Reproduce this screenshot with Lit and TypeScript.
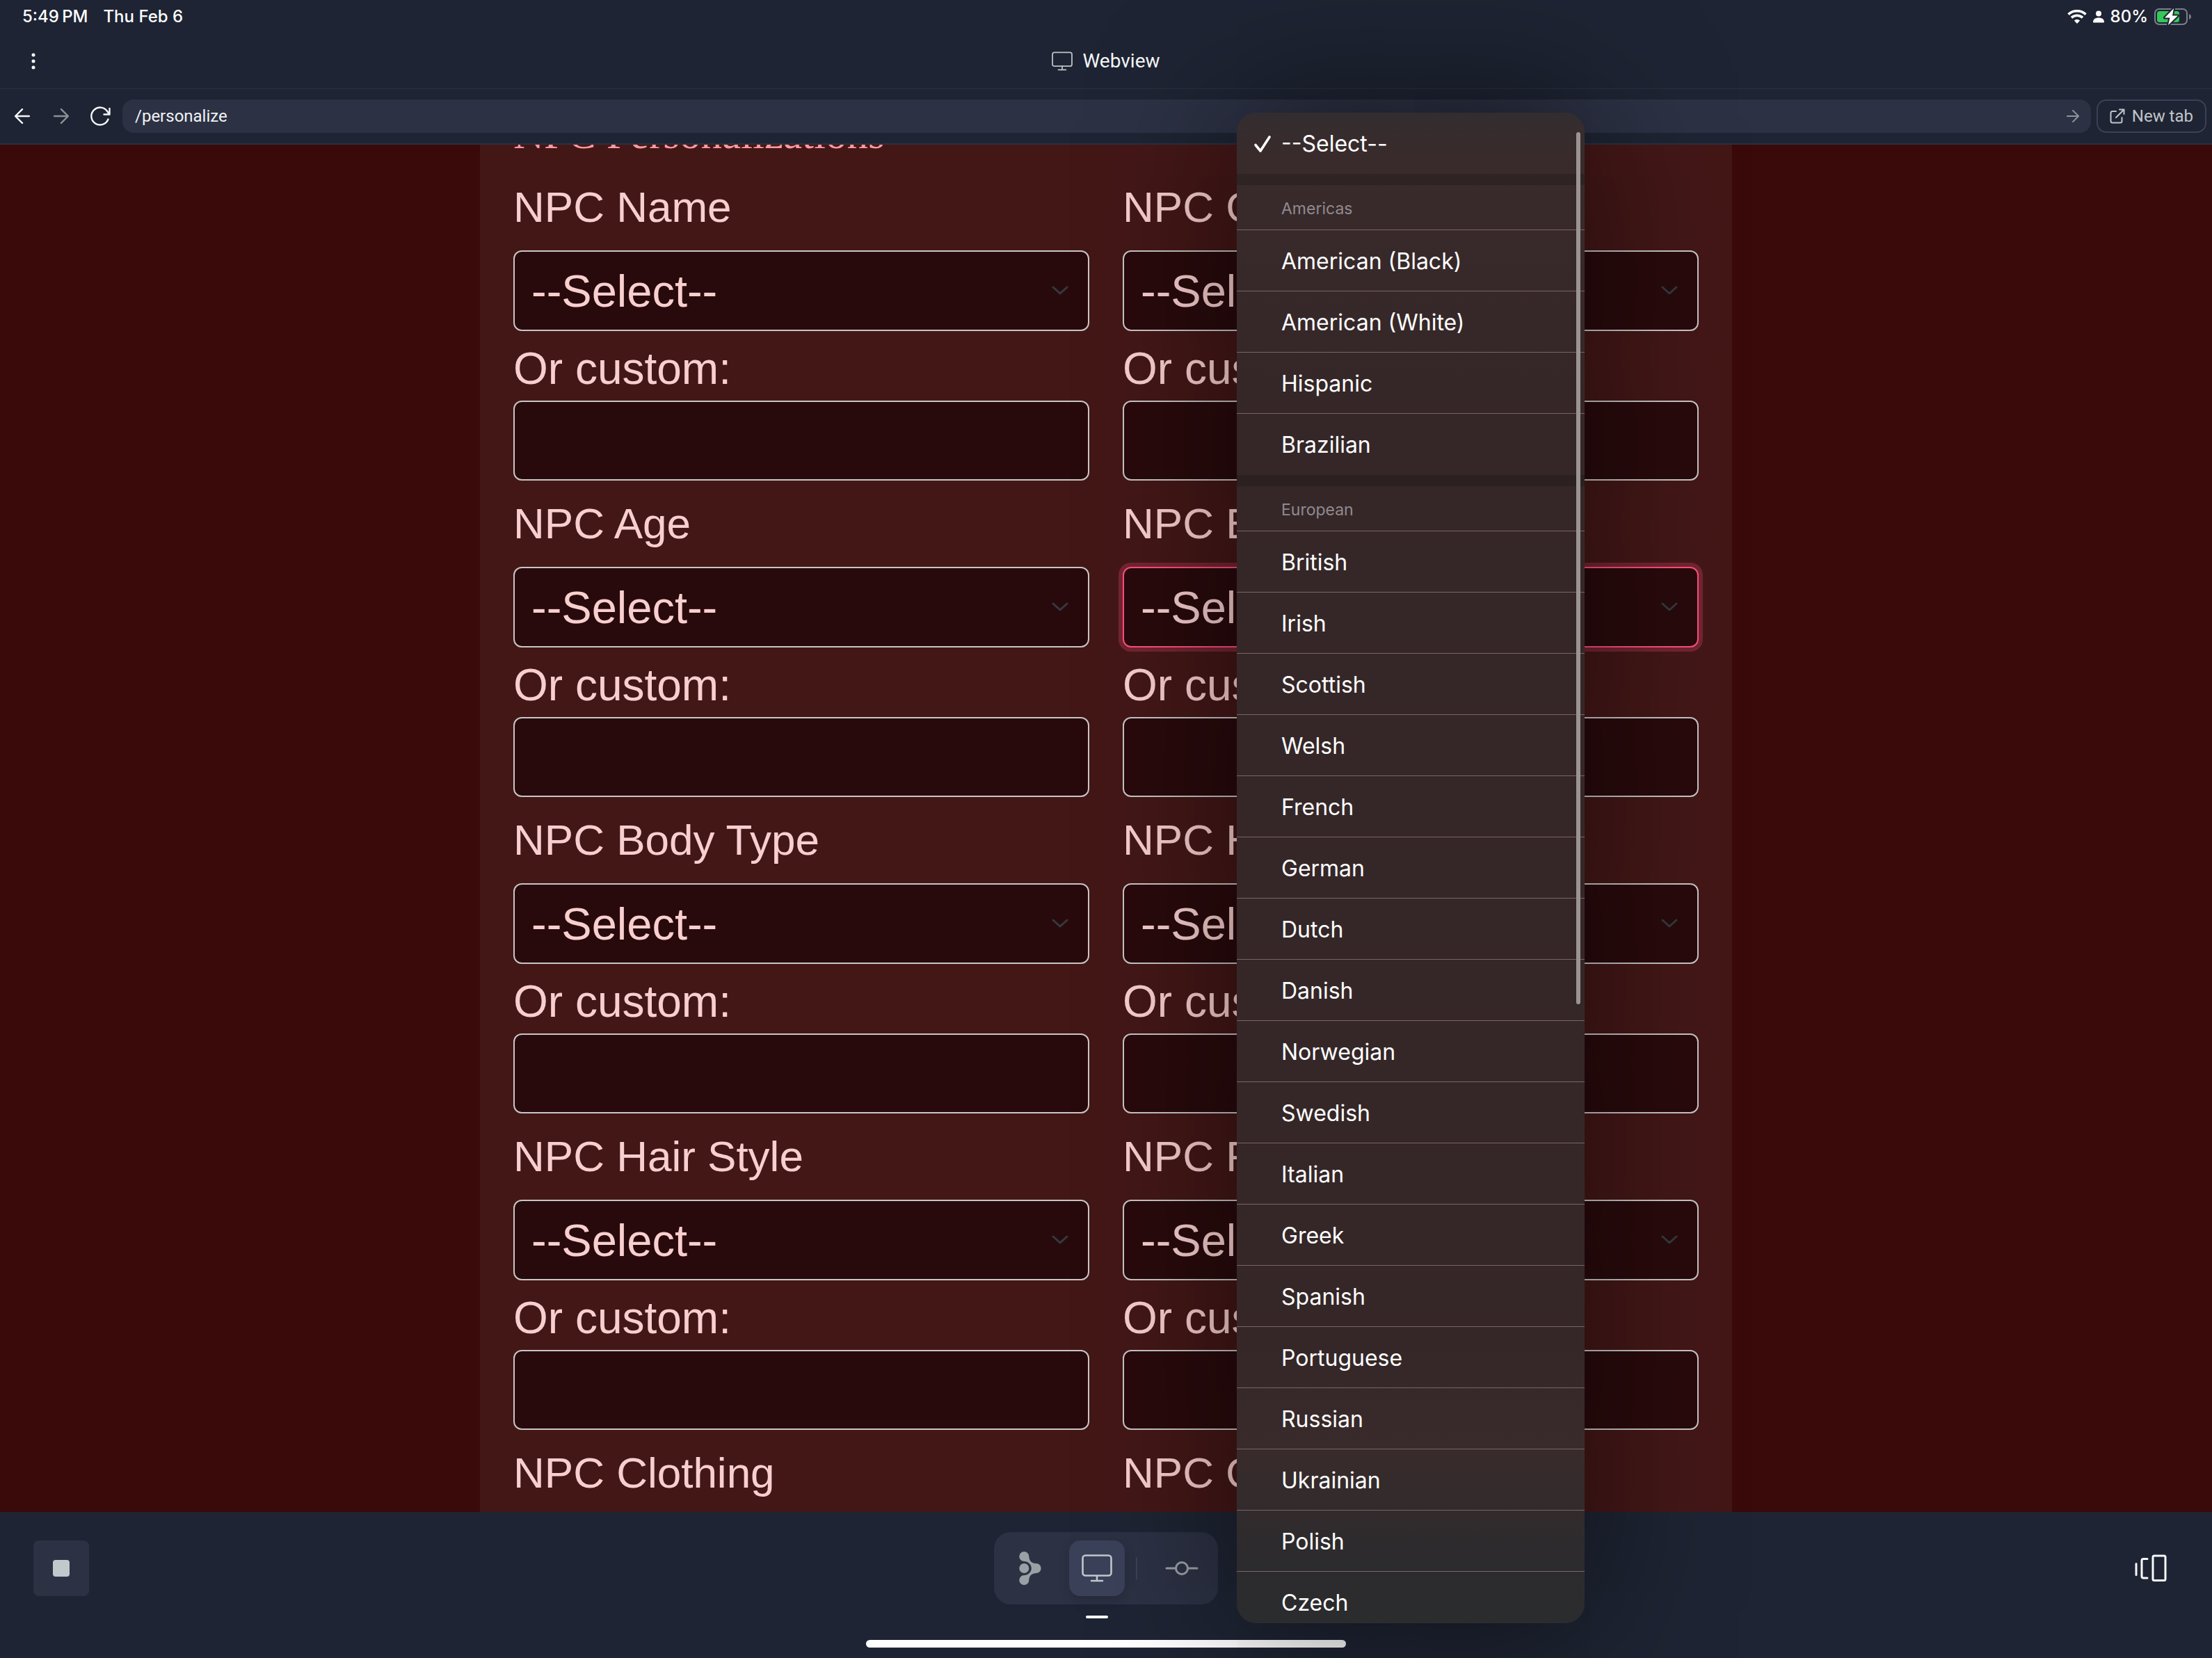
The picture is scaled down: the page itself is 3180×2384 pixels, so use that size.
import { LitElement, html, css, svg, nothing } from "lit";
import { customElement, property } from "lit/decorators.js";

interface MenuGroup {
  label: string;
  options: string[];
}

const GROUPS: MenuGroup[] = [
  {
    label: "Americas",
    options: ["American (Black)", "American (White)", "Hispanic", "Brazilian"],
  },
  {
    label: "European",
    options: [
      "British", "Irish", "Scottish", "Welsh", "French", "German", "Dutch",
      "Danish", "Norwegian", "Swedish", "Italian", "Greek", "Spanish",
      "Portuguese", "Russian", "Ukrainian", "Polish", "Czech",
    ],
  },
];

const FIELDS: string[] = [
  "NPC Name", "NPC Gender",
  "NPC Age", "NPC Ethnicity",
  "NPC Body Type", "NPC Hair Color",
  "NPC Hair Style", "NPC Facial Hair",
  "NPC Clothing", "NPC Occupation",
];

const FOCUSED = "NPC Ethnicity";

const monitor = (w: number, h: number, stroke: number) => html`
  <svg width=${w} height=${h} viewBox="0 0 44 40" fill="none" stroke="currentColor" stroke-width=${stroke} stroke-linecap="round" stroke-linejoin="round" aria-hidden="true">
    <rect x="1.5" y="1.5" width="41" height="29" rx="4"></rect>
    <path d="M22 31v7M14 38h16"></path>
  </svg>`;

const arrow = (size: number, flip: boolean, w: number) => html`
  <svg width=${size} height=${size} viewBox="0 0 20 20" fill="none" stroke="currentColor" stroke-width=${w} stroke-linecap="round" stroke-linejoin="round" aria-hidden="true">
    ${flip ? svg`<path d="M19 10H1M10 1L1 10L10 19"></path>` : svg`<path d="M1 10H19M10 1L19 10L10 19"></path>`}
  </svg>`;

@customElement("status-bar")
export class StatusBar extends LitElement {
  static styles = css`
    :host { display: flex; align-items: center; height: 48px; padding: 0 29px 0 32px; color: #fff; font: 500 24px/32px Inter, "Liberation Sans", sans-serif; }
    .date { margin-left: 22px; flex: 1; }
    .icons { display: flex; align-items: center; gap: 9px; }
    svg { display: block; }
  `;
  render() {
    return html`
      <span>5:49&#8201;PM</span>
      <span class="date">Thu Feb 6</span>
      <div class="icons">
        <svg width="28" height="20" viewBox="0 0 28 20" fill="none" stroke="#fff" aria-hidden="true">
          <path d="M1.500 6.600C8.500 .2 19.500 .2 26.500 6.600" stroke-width="3.600"></path>
          <path d="M6 11.400C10.500 7.200 17.500 7.200 22 11.400" stroke-width="3.600"></path>
          <path d="M14 20L9.800 15.600C12.200 13.400 15.800 13.400 18.200 15.600Z" fill="#fff" stroke="none"></path>
        </svg>
        <svg width="16" height="18" viewBox="0 0 16 18" fill="#fff" aria-hidden="true">
          <circle cx="8" cy="4.500" r="4"></circle>
          <path d="M0 16.500C0 12.500 3.500 10.500 8 10.500S16 12.500 16 16.500Q16 17.500 15 17.500H1Q0 17.500 0 16.500Z"></path>
        </svg>
        <span>80%</span>
        <svg width="54" height="26" viewBox="0 0 54 26" aria-hidden="true">
          <rect x="1" y="2" width="46" height="22" rx="6" fill="none" stroke="#7b7f88" stroke-width="2"></rect>
          <path d="M50 9C54 10.500 54 15.500 50 17Z" fill="#7b7f88"></path>
          <rect x="4" y="5" width="32" height="16" rx="3.500" fill="#34c759"></rect>
          <path d="M28 1L15 14.500H22.500L20 25L34 11.500H26Z" fill="#fff" stroke="#1e2433" stroke-width="4" paint-order="stroke" stroke-linejoin="round"></path>
        </svg>
      </div>`;
  }
}

@customElement("browser-bar")
export class BrowserBar extends LitElement {
  static styles = css`
    :host { display: block; color: #f4f6f8; font: 400 24px/32px Roboto, "Liberation Sans", sans-serif; }
    button { font: inherit; color: inherit; background: none; border: 0; padding: 0; display: flex; align-items: center; justify-content: center; }
    svg { display: block; }
    .title { display: grid; grid-template-columns: 1fr auto 1fr; align-items: center; height: 79px; border-bottom: 1px solid #2b3042; }
    .more { width: 48px; height: 48px; margin-left: 24px; }
    .name { display: flex; align-items: center; gap: 14px; margin: 0; font-size: 28px; font-weight: 400; }
    .name svg { color: #bfc4c8; }
    .tools { display: flex; align-items: center; height: 78px; padding: 0 8px 0 4px; border-bottom: 2px solid #2b3042; }
    .nav { width: 56px; height: 56px; }
    .off { color: #8d9196; }
    .address { flex: 1; display: flex; align-items: center; height: 48px; margin: 0 8px 0 4px; border-radius: 16px; background: #2c3144; }
    .address input { flex: 1; min-width: 0; height: 48px; padding: 0 18px; border: 0; background: none; font: inherit; color: #f0f2f4; outline: none; }
    .go { width: 52px; height: 48px; color: #8f949c; }
    .tab { box-sizing: border-box; height: 48px; gap: 10px; padding: 0 17px; border: 2px solid #3a4158; border-radius: 14px; color: #c0c4c9; }
  `;
  render() {
    return html`
      <header class="title">
        <button class="more" aria-label="More">
          <svg width="6" height="24" viewBox="0 0 6 24" fill="currentColor"><circle cx="3" cy="3" r="2.500"></circle><circle cx="3" cy="12" r="2.500"></circle><circle cx="3" cy="21" r="2.500"></circle></svg>
        </button>
        <h1 class="name">${monitor(30, 28, 2.6)}Webview</h1>
      </header>
      <nav class="tools">
        <button class="nav" aria-label="Back">${arrow(22, true, 2.2)}</button>
        <button class="nav off" aria-label="Forward">${arrow(22, false, 2.2)}</button>
        <button class="nav" aria-label="Reload">
          <svg width="30" height="28" viewBox="0 0 30 28" fill="none" stroke="currentColor" stroke-width="2.400" stroke-linecap="round" stroke-linejoin="round"><path d="M26.500 18.500A12.500 12.500 0 1 1 25.500 7.500L28.500 11.500M28.500 3V11.500H20.500"></path></svg>
        </button>
        <div class="address">
          <input aria-label="Address" .value=${"/personalize"} />
          <button class="go" aria-label="Go">${arrow(18, false, 2.2)}</button>
        </div>
        <button class="tab">
          <svg width="22" height="22" viewBox="0 0 22 22" fill="none" stroke="currentColor" stroke-width="2" stroke-linecap="round" stroke-linejoin="round"><path d="M9 4H4Q1.500 4 1.500 6.500V18Q1.500 20.500 4 20.500H15Q17.500 20.500 17.500 18V13M14 1.500H20.500V8M20.500 1.500L9 13"></path></svg>
          New tab
        </button>
      </nav>`;
  }
}

@customElement("npc-field")
export class NpcField extends LitElement {
  @property() label = "";
  @property({ type: Boolean }) focused = false;
  static styles = css`
    :host { display: block; min-width: 0; color: #f8cfcf; font: 400 62px/72px "Liberation Sans", sans-serif; }
    label { display: block; white-space: nowrap; }
    .alt { font-size: 64px; }
    .pick { display: grid; margin: 26px 0 18px; align-items: center; }
    select, input { box-sizing: border-box; width: 100%; border: 2px solid #c8c6c6; border-radius: 12px; background: #290a0c; color: inherit; font: inherit; outline: none; }
    select { grid-area: 1 / 1; appearance: none; height: 116px; padding: 2px 72px 0 24px; font-size: 65px; }
    input { display: block; height: 115px; margin-top: 10px; padding: 0 24px; }
    .on { border-color: #ff4f81; box-shadow: 0 0 0 6px rgba(255, 79, 129, 0.25); }
    svg { grid-area: 1 / 1; justify-self: end; margin-right: 30px; pointer-events: none; }
  `;
  render() {
    return html`
      <label for="pick">${this.label}</label>
      <div class="pick">
        <select id="pick" class=${this.focused ? "on" : nothing}><option>--Select--</option></select>
        <svg width="24" height="14" viewBox="0 0 24 14" fill="none" stroke="#343a40" stroke-width="3" stroke-linecap="round" stroke-linejoin="round" aria-hidden="true"><path d="M2 2L12 11L22 2"></path></svg>
      </div>
      <label class="alt" for="custom">Or custom:</label>
      <input id="custom" type="text" />`;
  }
}

@customElement("option-menu")
export class OptionMenu extends LitElement {
  static styles = css`
    :host { display: block; overflow: hidden; border-radius: 28px; color: #fff; font: 400 32px/40px Inter, "Liberation Sans", sans-serif;
      background: linear-gradient(#332d2f 0, #392b2c 60px, #352728 400px, #352728 calc(100% - 400px), #392b2b calc(100% - 250px), #2c2b2e calc(100% - 90px), #2b2c2e 100%);
      box-shadow: 0 0 200px rgba(0, 0, 0, 0.6); }
    .option, .heading { box-sizing: border-box; display: flex; align-items: center; padding: 2px 64px 0; height: 88px; border-bottom: 1px solid #7b6465; }
    .group .option:last-child { border-bottom-color: transparent; }
    .chosen { border-bottom: 0; padding-left: 24px; gap: 14px; }
    .heading { height: 65px; padding-top: 4px; font-size: 23px; color: #918a90; }
    .group { border-top: 16px solid rgba(0, 0, 0, 0.16); background-clip: padding-box; }
    .thumb { position: absolute; top: 28px; right: 6px; width: 6px; height: 1254px; border-radius: 3px; background: #9b9393; }
  `;
  render() {
    return html`
      <div role="listbox" aria-label="NPC Ethnicity">
        <div class="option chosen" role="option" aria-selected="true">
          <svg width="26" height="26" viewBox="0 0 26 26" fill="none" stroke="#fff" stroke-width="3.600" stroke-linecap="round" stroke-linejoin="round" aria-hidden="true"><path d="M3 14.500L10 23L23 3"></path></svg>
          --Select--
        </div>
        ${GROUPS.map((g) => html`
          <div class="group" role="group" aria-label=${g.label}>
            <div class="heading">${g.label}</div>
            ${g.options.map((o) => html`<div class="option" role="option" aria-selected="false">${o}</div>`)}
          </div>`)}
      </div>
      <div class="thumb"></div>`;
  }
}

@customElement("dock-bar")
export class DockBar extends LitElement {
  static styles = css`
    :host { display: block; box-sizing: border-box; padding: 29px 48px 15px; }
    button { width: 80px; height: 80px; padding: 0; border: 0; border-radius: 16px; background: none; color: #9ba0a5; display: flex; align-items: center; justify-content: center; }
    .row { display: grid; grid-template-columns: 1fr auto 1fr; align-items: center; }
    .stop { border-radius: 8px; background: #2c3144; }
    .stop span { width: 24px; height: 24px; border-radius: 4px; background: #c3c8cc; }
    .tabs { display: flex; align-items: center; gap: 16px; padding: 12px; border-radius: 24px; background: #2c3144; }
    .active { position: relative; background: #3a4159; color: #c3c8cc; box-shadow: 0 4px 16px rgba(0, 0, 0, 0.15); }
    .active::after { content: ""; position: absolute; left: 24px; right: 24px; top: 108px; height: 4px; border-radius: 2px; background: #fff; }
    .rule { width: 2px; height: 32px; margin-right: 8px; background: #3a4159; }
    .side { justify-self: end; color: #f7f8fa; }
    .home { width: 690px; height: 11px; margin: 51px auto 0; border-radius: 6px; background: #fff; }
  `;
  render() {
    return html`
      <div class="row">
        <button class="stop" aria-label="Stop"><span></span></button>
        <div class="tabs">
          <button aria-label="Agent">
            <svg width="34" height="50" viewBox="-17 -25 34 50" fill="currentColor"><circle cx="-8.700" cy="0" r="7"></circle><path d="M-1.700-17C-1.500-10 3-7 8.700-6.900A6.900 6.900 0 0 1 8.700 6.900C3 7-1.500 10-1.700 17A7 7 0 1 1-8.700 10C-3 10 1.800 5.500 1.800 0C1.800-5.500-3-10-8.700-10A7 7 0 1 1-1.700-17Z"></path></svg>
          </button>
          <button class="active" aria-label="Webview">${monitor(44, 40, 2.6)}</button>
          <span class="rule"></span>
          <button aria-label="Commits">
            <svg width="48" height="22" viewBox="0 0 48 22" fill="none" stroke="currentColor" stroke-width="3" stroke-linecap="round"><circle cx="24" cy="11" r="8.500"></circle><path d="M2 11H15.500M32.500 11H46"></path></svg>
          </button>
        </div>
        <button class="side" aria-label="Panels">
          <svg width="48" height="40" viewBox="0 0 48 40" fill="none" stroke="currentColor" stroke-width="3" stroke-linecap="round" stroke-linejoin="round"><path d="M3 13.500V29.500M19 6.500H13.500Q11 6.500 11 9V31.500Q11 34 13.500 34H19"></path><rect x="27" y="2" width="18" height="35.500" rx="2"></rect></svg>
        </button>
      </div>
      <div class="home"></div>`;
  }
}

@customElement("app-root")
export class AppRoot extends LitElement {
  static styles = css`
    :host { display: flex; flex-direction: column; position: relative; height: 100vh; overflow: hidden; background: #1e2433; }
    .page { flex: 1; min-height: 0; overflow: hidden; background: #3a0a0b; }
    .panel { box-sizing: border-box; max-width: 1800px; margin: -51px auto 0; padding: 0 48px; background: #441717; }
    h2 { margin: 0 0 33px; color: #ff9a9e; font: 400 61px/72px "Liberation Serif", serif; }
    .fields { display: grid; grid-template-columns: 1fr 1fr; gap: 26px 48px; }
    .menu { position: absolute; top: 162px; bottom: 50px; left: calc(50% + 188px); width: 500px; }
  `;
  render() {
    return html`
      <status-bar></status-bar>
      <browser-bar></browser-bar>
      <main class="page">
        <section class="panel">
          <h2>NPC Personalizations</h2>
          <div class="fields">
            ${FIELDS.map((f) => html`<npc-field .label=${f} .focused=${f === FOCUSED}></npc-field>`)}
          </div>
        </section>
      </main>
      <dock-bar></dock-bar>
      <option-menu class="menu"></option-menu>`;
  }
}
